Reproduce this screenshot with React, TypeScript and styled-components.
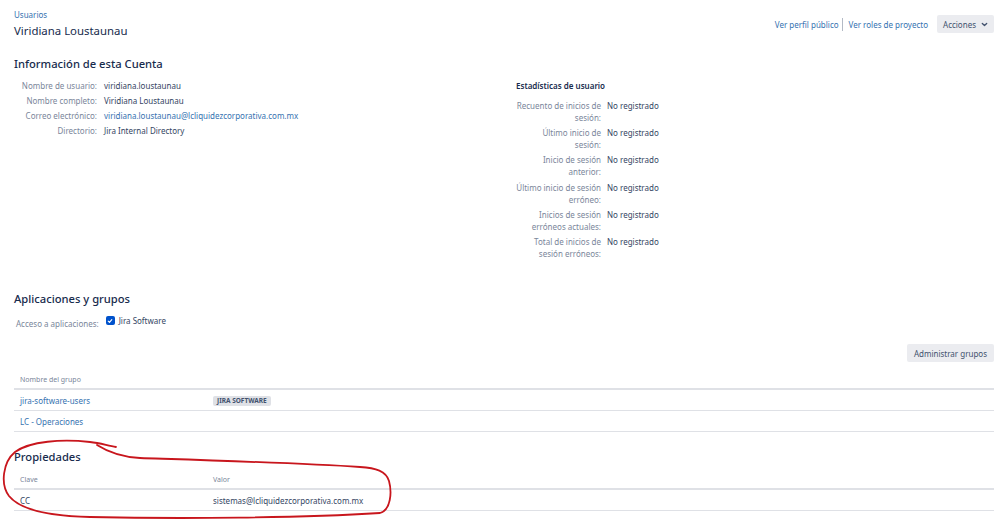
import styled, { createGlobalStyle } from 'styled-components';

const GlobalStyle = createGlobalStyle`
  html, body {
    margin: 0;
    padding: 0;
    background: #fff;
  }
  body {
    font-family: 'Noto Sans', 'Liberation Sans', sans-serif;
    color: #172b4d;
  }
  * {
    box-sizing: border-box;
  }
`;

const accountRows = [
  { label: 'Nombre de usuario:', value: 'viridiana.loustaunau' },
  { label: 'Nombre completo:', value: 'Viridiana Loustaunau' },
  { label: 'Correo electrónico:', value: 'viridiana.loustaunau@lcliquidezcorporativa.com.mx', link: true },
  { label: 'Directorio:', value: 'Jira Internal Directory' },
];

const statRows = [
  'Recuento de inicios de sesión:',
  'Último inicio de sesión:',
  'Inicio de sesión anterior:',
  'Último inicio de sesión erróneo:',
  'Inicios de sesión erróneos actuales:',
  'Total de inicios de sesión erróneos:',
];

const Chevron = () => (
  <svg width="7" height="7" viewBox="0 0 8 8">
    <path d="M1.5 2.8 L4 5.2 L6.5 2.8" fill="none" stroke="#42526e" strokeWidth="1.5" strokeLinecap="round" strokeLinejoin="round" />
  </svg>
);

const CheckMark = () => (
  <svg width="6" height="6" viewBox="0 0 8 8">
    <path d="M1.6 4.2 L3.3 5.8 L6.4 2.2" fill="none" stroke="#fff" strokeWidth="1.5" strokeLinecap="round" strokeLinejoin="round" />
  </svg>
);

const App: React.FC = () => {
  return (
    <>
      <GlobalStyle />
      <Page>
        <Header>
          <div>
            <Breadcrumb>Usuarios</Breadcrumb>
            <Title>Viridiana Loustaunau</Title>
          </div>
          <HeaderActions>
            <Link>Ver perfil público</Link>
            <Divider />
            <Link>Ver roles de proyecto</Link>
            <Button $withIcon>
              Acciones <Chevron />
            </Button>
          </HeaderActions>
        </Header>

        <SectionTitle>Información de esta Cuenta</SectionTitle>
        <InfoColumns>
          <AccountList>
            {accountRows.map((row) => (
              <FieldRow key={row.label}>
                <FieldLabel>{row.label}</FieldLabel>
                <FieldValue $link={row.link}>{row.value}</FieldValue>
              </FieldRow>
            ))}
          </AccountList>
          <Stats>
            <StatsTitle>Estadísticas de usuario</StatsTitle>
            {statRows.map((label) => (
              <StatRow key={label}>
                <StatLabel>{label}</StatLabel>
                <StatValue>No registrado</StatValue>
              </StatRow>
            ))}
          </Stats>
        </InfoColumns>

        <SectionTitle $top={26}>Aplicaciones y grupos</SectionTitle>
        <AccessRow>
          <AccessLabel>Acceso a aplicaciones:</AccessLabel>
          <Checkbox>
            <CheckMark />
          </Checkbox>
          <AccessValue>Jira Software</AccessValue>
        </AccessRow>

        <Toolbar>
          <Button>Administrar grupos</Button>
        </Toolbar>

        <Table $top={8}>
          <HeadRow>
            <Cell>Nombre del grupo</Cell>
            <Cell />
          </HeadRow>
          <BodyRow>
            <Cell $link>jira-software-users</Cell>
            <Cell>
              <Lozenge>JIRA SOFTWARE</Lozenge>
            </Cell>
          </BodyRow>
          <BodyRow>
            <Cell $link>LC - Operaciones</Cell>
            <Cell />
          </BodyRow>
        </Table>

        <SectionTitle $top={16}>Propiedades</SectionTitle>
        <Table $top={5}>
          <HeadRow>
            <Cell>Clave</Cell>
            <Cell>Valor</Cell>
          </HeadRow>
          <BodyRow>
            <Cell>CC</Cell>
            <Cell>sistemas@lcliquidezcorporativa.com.mx</Cell>
          </BodyRow>
        </Table>

        <Annotation width="999" height="519" viewBox="0 0 999 519">
          <path
            d="M116 447 C108 446 101 443 90 442 C62 439 30 441 15 452 C3 462 0 484 9 496 C20 510 48 516 90 517 C180 519 300 518 380 513 C391 510 392 492 389 481 C386 471 376 468 360 467 C300 463 200 460 140 458 C121 457 108 452 97 445"
            fill="none"
            stroke="#c8161d"
            strokeWidth="1.8"
            strokeLinecap="round"
          />
        </Annotation>
      </Page>
    </>
  );
};

const Page = styled.div`
  position: relative;
  width: 999px;
  height: 519px;
  overflow: hidden;
  padding: 9px 5px 0 14px;
  font-size: 8px;
`;

const Header = styled.div`
  display: flex;
  justify-content: space-between;
  align-items: flex-start;
`;

const Breadcrumb = styled.div`
  color: #3572b0;
  line-height: 11px;
`;

const Title = styled.h1`
  margin: 2px 0 0;
  font-size: 11.4px;
  font-weight: 400;
  line-height: 17px;
  color: #172b4d;
`;

const HeaderActions = styled.div`
  display: flex;
  align-items: center;
  margin-top: 6px;
`;

const Link = styled.a`
  color: #3572b0;
  cursor: pointer;
`;

const Divider = styled.span`
  width: 1px;
  height: 13px;
  background: #b3bac5;
  margin: 0 6px 0 3px;
`;

const Button = styled.button<{ $withIcon?: boolean }>`
  display: flex;
  align-items: center;
  gap: 5px;
  height: 18px;
  margin-left: ${(p) => (p.$withIcon ? '9px' : '0')};
  padding: 0 ${(p) => (p.$withIcon ? '6px' : '7px')};
  border: none;
  border-radius: 2px;
  background: #ebecf0;
  color: #42526e;
  font-family: inherit;
  font-size: 8px;
`;

const SectionTitle = styled.h2<{ $top?: number }>`
  margin: ${(p) => p.$top ?? 16}px 0 0;
  font-size: 11.2px;
  font-weight: 500;
  line-height: 17px;
  color: #172b4d;
`;

const InfoColumns = styled.div`
  display: flex;
  margin-top: 6px;
  height: 186px;
`;

const AccountList = styled.div`
  display: flex;
  flex-direction: column;
  width: 502px;
`;

const FieldRow = styled.div`
  display: flex;
  line-height: 15px;
`;

const FieldLabel = styled.span`
  width: 90px;
  text-align: right;
  color: #7a869a;
  padding-right: 7px;
`;

const FieldValue = styled.span<{ $link?: boolean }>`
  color: ${(p) => (p.$link ? '#3572b0' : '#344563')};
`;

const Stats = styled.div`
  display: flex;
  flex-direction: column;
`;

const StatsTitle = styled.div`
  font-weight: 600;
  line-height: 15px;
  margin-bottom: 7px;
`;

const StatRow = styled.div`
  display: flex;
  margin-bottom: 3.2px;
  line-height: 12px;
`;

const StatLabel = styled.span`
  width: 91px;
  padding-right: 6px;
  text-align: right;
  color: #7a869a;
`;

const StatValue = styled.span`
  color: #344563;
`;

const AccessRow = styled.div`
  display: flex;
  align-items: center;
  margin-top: 7px;
  padding-left: 2px;
`;

const AccessLabel = styled.span`
  color: #7a869a;
  margin-top: 4px;
`;

const Checkbox = styled.span`
  display: flex;
  align-items: center;
  justify-content: center;
  width: 9px;
  height: 9px;
  margin: -2px 4px 0 7px;
  border-radius: 2px;
  background: #0052cc;
`;

const AccessValue = styled.span`
  color: #344563;
  margin-top: -2px;
`;

const Toolbar = styled.div`
  display: flex;
  justify-content: flex-end;
  margin-top: 15px;
`;

const Table = styled.div<{ $top: number }>`
  display: flex;
  flex-direction: column;
  margin-top: ${(p) => p.$top}px;
`;

const HeadRow = styled.div`
  display: grid;
  grid-template-columns: 193px 1fr;
  height: 20px;
  align-items: center;
  border-bottom: 2px solid #dfe1e6;
  color: #7a869a;
  font-size: 7px;
`;

const BodyRow = styled.div`
  display: grid;
  grid-template-columns: 193px 1fr;
  height: 21px;
  align-items: center;
  border-bottom: 1px solid #dfe1e6;
  color: #344563;
`;

const Cell = styled.div<{ $link?: boolean }>`
  padding-left: 6px;
  color: ${(p) => (p.$link ? '#3572b0' : 'inherit')};
`;

const Lozenge = styled.span`
  display: inline-block;
  padding: 1px 4px;
  border-radius: 2px;
  background: #dfe1e6;
  color: #42526e;
  font-size: 6.5px;
  font-weight: 700;
  line-height: 8px;
`;

const Annotation = styled.svg`
  position: absolute;
  left: 0;
  top: 0;
  pointer-events: none;
`;

export default App;
